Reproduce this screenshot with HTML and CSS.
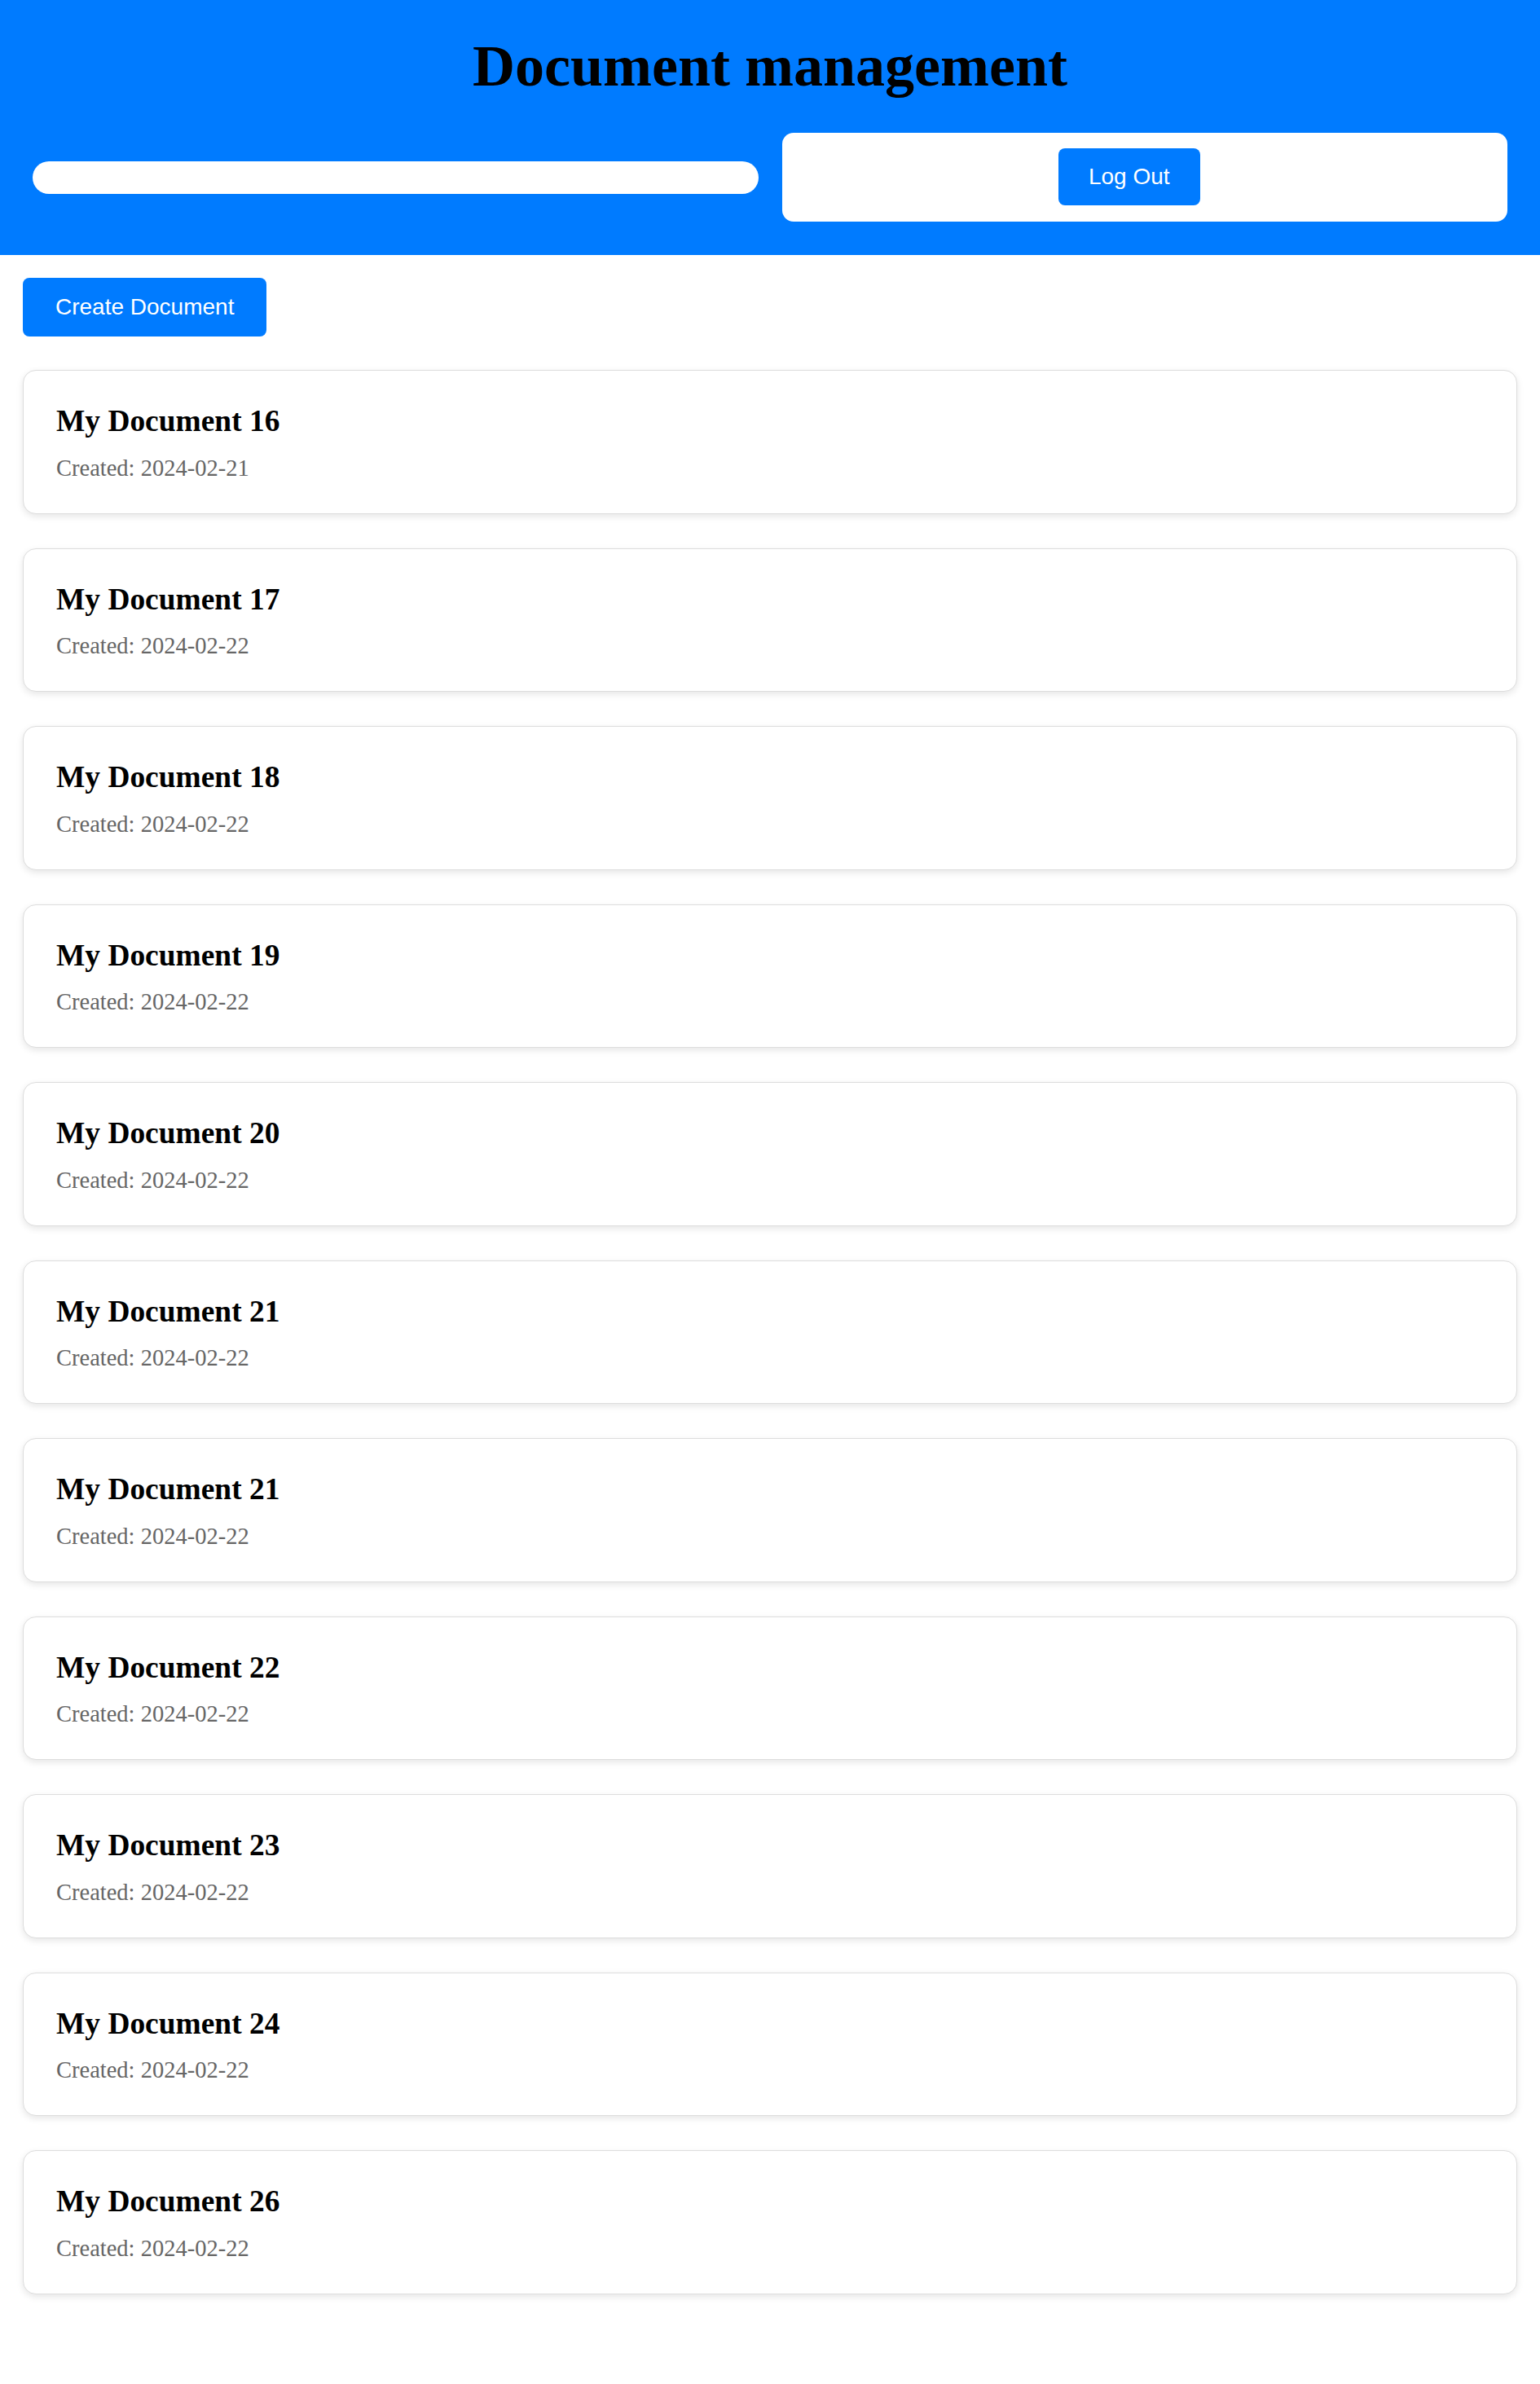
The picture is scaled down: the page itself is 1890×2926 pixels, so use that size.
FILE: index.html
```html
<!DOCTYPE html>
<html lang="en">
<head>
<meta charset="utf-8">
<title>Document management</title>
<link rel="stylesheet" href="styles.css">
</head>
<body>
<header class="topbar">
  <h1 class="title">Document management</h1>
  <div class="controls">
    <input class="search" type="text" aria-label="Search">
    <div class="account">
      <button class="btn btn-logout">Log Out</button>
    </div>
  </div>
</header>
<main class="content">
  <button class="btn btn-create">Create Document</button>
  <ul class="doc-list">
    <li class="doc-card"><h3 class="doc-title">My Document 16</h3><p class="doc-date">Created: 2024-02-21</p></li>
    <li class="doc-card"><h3 class="doc-title">My Document 17</h3><p class="doc-date">Created: 2024-02-22</p></li>
    <li class="doc-card"><h3 class="doc-title">My Document 18</h3><p class="doc-date">Created: 2024-02-22</p></li>
    <li class="doc-card"><h3 class="doc-title">My Document 19</h3><p class="doc-date">Created: 2024-02-22</p></li>
    <li class="doc-card"><h3 class="doc-title">My Document 20</h3><p class="doc-date">Created: 2024-02-22</p></li>
    <li class="doc-card"><h3 class="doc-title">My Document 21</h3><p class="doc-date">Created: 2024-02-22</p></li>
    <li class="doc-card"><h3 class="doc-title">My Document 21</h3><p class="doc-date">Created: 2024-02-22</p></li>
    <li class="doc-card"><h3 class="doc-title">My Document 22</h3><p class="doc-date">Created: 2024-02-22</p></li>
    <li class="doc-card"><h3 class="doc-title">My Document 23</h3><p class="doc-date">Created: 2024-02-22</p></li>
    <li class="doc-card"><h3 class="doc-title">My Document 24</h3><p class="doc-date">Created: 2024-02-22</p></li>
    <li class="doc-card"><h3 class="doc-title">My Document 26</h3><p class="doc-date">Created: 2024-02-22</p></li>
  </ul>
</main>
</body>
</html>
```
FILE: styles.css
```css
html, body {
  margin: 0;
  padding: 0;
  background: #ffffff;
}

body {
  font-family: "Liberation Serif", "Times New Roman", serif;
  color: #000000;
}

.topbar {
  background: #007bff;
  padding: 41px 40px 41px;
}

.title {
  margin: 0 0 42px;
  font-size: 72px;
  line-height: 80px;
  font-weight: bold;
  text-align: center;
}

.controls {
  display: flex;
  align-items: center;
  gap: 29px;
}

.search {
  flex: 1 1 0;
  width: 0;
  min-width: 0;
  height: 40px;
  box-sizing: border-box;
  border: none;
  border-radius: 20px;
  background: #ffffff;
  padding: 0;
  outline: none;
}

.account {
  flex: 1 1 0;
  width: 0;
  min-width: 0;
  background: #ffffff;
  border-radius: 14px;
  padding: 19px 0 20px;
  display: flex;
  justify-content: center;
}

.btn {
  font-family: "Liberation Sans", Arial, sans-serif;
  font-size: 28px;
  color: #ffffff;
  background: #007bff;
  border: none;
  border-radius: 8px;
  cursor: pointer;
}

.btn-logout {
  height: 70px;
  padding: 0 37px;
  margin-right: 38px;
}

.content {
  padding: 28px 28px 80px;
}

.btn-create {
  display: block;
  height: 72px;
  padding: 0 40px;
  margin: 0 0 41px;
}

.doc-list {
  list-style: none;
  margin: 0;
  padding: 0;
  display: flex;
  flex-direction: column;
  gap: 42px;
}

.doc-card {
  background: #ffffff;
  border: 1px solid #dddddd;
  border-radius: 16px;
  padding: 40px;
  box-shadow: 0 3px 8px rgba(0, 0, 0, 0.1);
}

.doc-title {
  margin: 0 0 20.5px;
  font-size: 37.44px;
  line-height: 43px;
  font-weight: bold;
}

.doc-date {
  margin: 0;
  font-size: 28.5px;
  line-height: 31px;
  color: #666666;
}
```
